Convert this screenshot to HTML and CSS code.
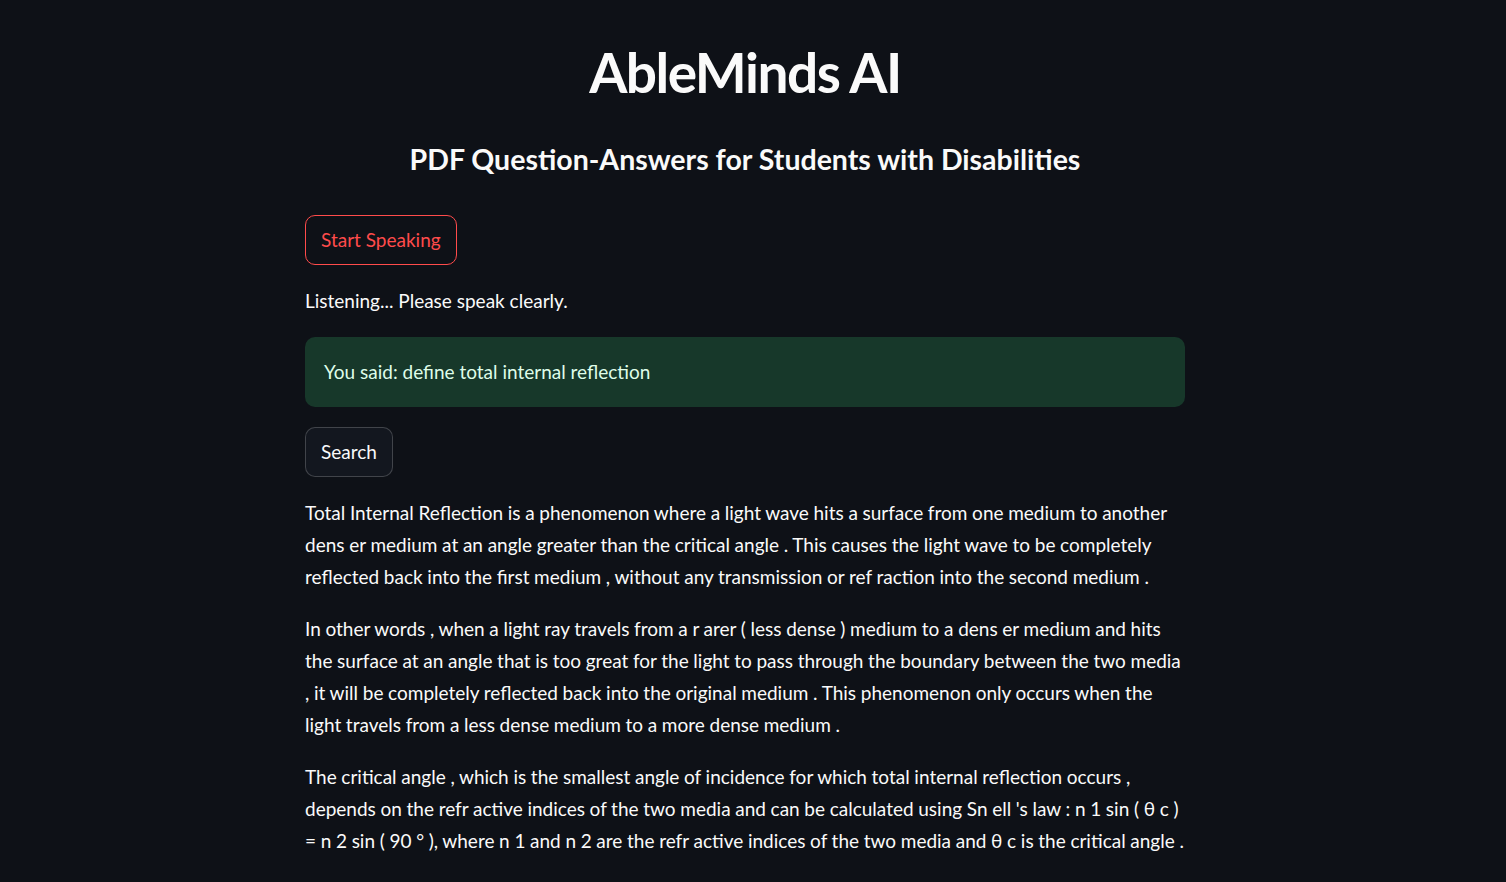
FILE: index.html
```html
<!DOCTYPE html>
<html lang="en">
<head>
    <meta charset="UTF-8">
    <meta name="viewport" content="width=device-width, initial-scale=1.0">
    <title>AbleMinds AI</title>
    <link rel="stylesheet" href="styles.css">
</head>
<body>
    <div class="main">
        <h1 class="title">AbleMinds AI</h1>
        <h3 class="subtitle">PDF Question-Answers for Students with Disabilities</h3>

        <div class="row">
            <button class="btn btn-active">Start Speaking</button>
        </div>

        <p class="status">Listening... Please speak clearly.</p>

        <div class="alert-success">You said: define total internal reflection</div>

        <div class="row">
            <button class="btn">Search</button>
        </div>

        <div class="answer">
            <p>Total Internal Reflection is a phenomenon where a light wave hits a surface from one medium to another dens er medium at an angle greater than the critical angle . This causes the light wave to be completely reflected back into the first medium , without any transmission or ref raction into the second medium .</p>
            <p>In other words , when a light ray travels from a r arer ( less dense ) medium to a dens er medium and hits the surface at an angle that is too great for the light to pass through the boundary between the two media , it will be completely reflected back into the original medium . This phenomenon only occurs when the light travels from a less dense medium to a more dense medium .</p>
            <p>The critical angle , which is the smallest angle of incidence for which total internal reflection occurs , depends on the refr active indices of the two media and can be calculated using Sn ell 's law : n 1 sin ( &theta; c ) = n 2 sin ( 90 &deg; ), where n 1 and n 2 are the refr active indices of the two media and &theta; c is the critical angle .</p>
        </div>
    </div>
</body>
</html>
```

FILE: styles.css
```css
html, body {
    margin: 0;
    padding: 0;
    background-color: #0e1117;
    color: #fafafa;
    font-family: "Source Sans Pro", Lato, "Noto Sans", sans-serif;
}
body {
    padding-right: 16px;
    overflow: hidden;
}
.main {
    width: 880px;
    margin: 0 auto;
    display: flex;
    flex-direction: column;
    gap: 20px;
    padding-top: 39px;
}
.title {
    margin: 0;
    font-size: 55px;
    font-weight: 700;
    line-height: 66px;
    text-align: center;
    letter-spacing: -1.5px;
}
.subtitle {
    margin: 0;
    padding: 14px 0 16px;
    font-size: 28.5px;
    font-weight: 700;
    line-height: 40px;
    text-align: center;
}
.row {
    display: flex;
}
.btn {
    font-family: inherit;
    font-size: 19px;
    line-height: 32px;
    padding: 8px 15px;
    color: #fafafa;
    background-color: #13171f;
    border: 1px solid rgba(250, 250, 250, 0.2);
    border-radius: 10px;
    cursor: pointer;
}
.btn-active {
    color: #ff4b4b;
    border-color: #ff4b4b;
    background-color: #0e1117;
}
.status {
    margin: 0;
    font-size: 19px;
    line-height: 32px;
}
.alert-success {
    padding: 19px 19px;
    font-size: 19px;
    line-height: 32px;
    color: #dffde9;
    background-color: #17382a;
    border-radius: 10px;
}
.answer p {
    margin: 0 0 20px;
    font-size: 19px;
    line-height: 32px;
    word-spacing: -0.2px;
}
```
